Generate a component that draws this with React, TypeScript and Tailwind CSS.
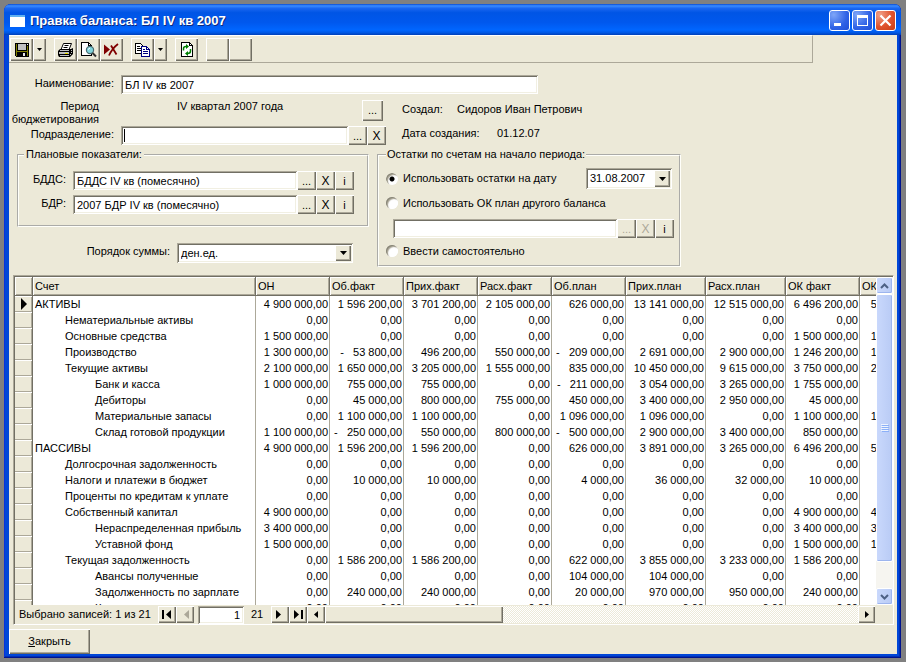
import type { ReactNode } from "react";

const RAISED =
  "bg-[#ece9d8] shadow-[inset_1px_1px_#fff,inset_-1px_-1px_#716f64,inset_-2px_-2px_#aca899]";
const SUNKEN =
  "bg-white shadow-[inset_1px_1px_#aca899,inset_-1px_-1px_#fff,inset_2px_2px_#716f64,inset_-2px_-2px_#f1efe2]";

/* ---------- toolbar icons ---------- */

const SaveIcon = () => (
  <svg width="16" height="16" viewBox="0 0 16 16" shapeRendering="crispEdges" aria-hidden="true">
    <path d="M1 1h14v14H2l-1-1z" fill="#000" />
    <path d="M2 2h1v12H2zM13 4h1v10h-1zM3 9h10v1H3z" fill="#808000" />
    <path d="M4 2h8v6H4z" fill="#c0c0c0" />
    <path d="M13 2h1v1h-1z" fill="#fff" />
    <path d="M4 10h8v4H4z" fill="#000" />
    <path d="M9 11h2v3H9z" fill="#e8e8e8" />
  </svg>
);

const PrintIcon = () => (
  <svg width="17" height="16" viewBox="0 0 17 16" aria-hidden="true">
    <path d="M6.500 1.500h8l-2.500 6h-8z" fill="#fff" stroke="#000" />
    <path d="M7.500 3.500h4M6.500 5.500h4" stroke="#000" />
    <path d="M3 7h11l2-1v6l-3 3H2l-1-2V9z" fill="#000" />
    <path d="M3 8h9v1H3zM2 10h10v2H2zM3 13h9v1H3z" fill="#c0c0c0" shapeRendering="crispEdges" />
    <path d="M8 11h3v1H8z" fill="#e8e000" shapeRendering="crispEdges" />
    <path d="M14 8h1v1h-1zM14 10h1v1h-1zM13 12h1v1h-1z" fill="#c0c0c0" shapeRendering="crispEdges" />
  </svg>
);

const PreviewIcon = () => (
  <svg width="17" height="17" viewBox="0 0 17 17" aria-hidden="true">
    <path d="M1.500 1.500h7l3 3v10h-10z" fill="#fff" stroke="#000" shapeRendering="crispEdges" />
    <path d="M8.500 1.500v3h3" fill="none" stroke="#000" shapeRendering="crispEdges" />
    <circle cx="10" cy="9" r="3.600" fill="#7fd4dc" stroke="#4a6a70" strokeWidth="1.200" />
    <path d="M8 8.500l2-1.500" stroke="#fff" />
    <path d="M12.500 12l3.500 3.500" stroke="#303030" strokeWidth="2" />
  </svg>
);

const DeleteIcon = () => (
  <svg width="17" height="14" viewBox="0 0 17 14" aria-hidden="true">
    <path d="M1 1.500l6 5-6 5z" fill="#800000" />
    <path d="M15 1C11 4 8.500 7 6 12.500M8 2.500l5.500 9" fill="none" stroke="#800000" strokeWidth="1.800" />
  </svg>
);

const CopyIcon = () => (
  <svg width="17" height="16" viewBox="0 0 17 16" shapeRendering="crispEdges" aria-hidden="true">
    <path d="M1.500 1.500h5l3 3v7h-8z" fill="#fff" stroke="#000" />
    <path d="M3 4.500h3M3 6.500h5M3 8.500h5" stroke="#000" />
    <path d="M7.500 4.500h5l3 3v7h-8z" fill="#fff" stroke="#000080" />
    <path d="M12.500 4.500v3h3M9 7.500h2M9 9.500h5M9 11.500h5" fill="none" stroke="#000080" />
  </svg>
);

const RefreshIcon = () => (
  <svg width="14" height="17" viewBox="0 0 14 17" aria-hidden="true">
    <path d="M1.500 1.500h8l3 3v11h-11z" fill="#fff" stroke="#000" shapeRendering="crispEdges" />
    <path d="M9.500 1.500v3h3" fill="none" stroke="#000" shapeRendering="crispEdges" />
    <path d="M3.500 9.500V7.500q0-2 2.500-2M10.500 8v2q0 2.500-3 2.500" fill="none" stroke="#008000" strokeWidth="1.500" />
    <path d="M6 3l3 2.500L6 8zM8 10l-3 2.500L8 15z" fill="#008000" />
  </svg>
);

const DownArrow = () => (
  <svg width="7" height="4" viewBox="0 0 7 4" aria-hidden="true">
    <path d="M0 0h7L3.500 4z" fill="#000" />
  </svg>
);

const TinyDownArrow = () => (
  <svg width="5" height="3" viewBox="0 0 5 3" className="shrink-0" aria-hidden="true">
    <path d="M0 0h5L2.500 3z" fill="#000" />
  </svg>
);

const RightArrow = ({ bar = false }: { bar?: boolean }) => (
  <svg width="10" height="9" viewBox="0 0 10 9" aria-hidden="true">
    <path d="M1 0v9l5-4.500z" fill="#000" />
    {bar && <path d="M8 0h2v9H8z" fill="#000" />}
  </svg>
);

const LeftArrow = ({ bar = false, color = "#000" }: { bar?: boolean; color?: string }) => (
  <svg width="10" height="9" viewBox="0 0 10 9" aria-hidden="true">
    <path d="M9 0v9L4 4.500z" fill={color} />
    {bar && <path d="M0 0h2v9H0z" fill={color} />}
  </svg>
);

/* ---------- small controls ---------- */

function ToolButton({ label, narrow, children }: { label: string; narrow?: boolean; children?: ReactNode }) {
  return (
    <button
      type="button"
      aria-label={label}
      className={`flex h-[23px] items-center justify-center ${narrow ? "w-[13px]" : "w-[23px]"} ${RAISED}`}
    >
      {children}
    </button>
  );
}

function SmallButton({ text, label, disabled }: { text: string; label: string; disabled?: boolean }) {
  return (
    <button
      type="button"
      aria-label={label}
      disabled={disabled}
      className={`h-[19px] w-[19px] text-center leading-4 disabled:text-[#aca899] ${text === "X" ? "text-[12px]" : "text-[11px]"} ${RAISED}`}
    >
      {text}
    </button>
  );
}

function PlanRow({ id, label, value }: { id: string; label: string; value: string }) {
  return (
    <div className="flex items-start">
      <label htmlFor={id} className="mr-[7px] w-[47px] text-right leading-4">
        {label}
      </label>
      <input id={id} defaultValue={value} className={`h-[19px] w-[224px] px-1 outline-none ${SUNKEN}`} />
      <SmallButton text="..." label={`${label} выбрать`} />
      <SmallButton text="X" label={`${label} очистить`} />
      <SmallButton text="i" label={`${label} информация`} />
    </div>
  );
}

function Radio({ id, label, checked }: { id: string; label: string; checked?: boolean }) {
  return (
    <div className="flex h-4 items-center gap-[5px]">
      <input
        id={id}
        type="radio"
        name="rest"
        defaultChecked={checked}
        className="h-3 w-3 appearance-none rounded-full bg-white shadow-[inset_1px_1px_#8a8778,inset_-1px_-1px_#fff,inset_2px_2px_1px_#aca899] checked:bg-[radial-gradient(circle,#000_2px,#fff_3px)]"
      />
      <label htmlFor={id}>{label}</label>
    </div>
  );
}

function Combo({ id, value, className }: { id: string; value: string; className: string }) {
  return (
    <div className={`relative ${className}`}>
      <select id={id} aria-label={value} className={`h-full w-full appearance-none pl-1 outline-none ${SUNKEN}`}>
        <option>{value}</option>
      </select>
      <span
        className={`pointer-events-none absolute inset-y-[2px] right-[2px] flex w-4 items-center justify-center ${RAISED}`}
      >
        <DownArrow />
      </span>
    </div>
  );
}

/* ---------- balance data ---------- */

const Z = "0,00";

const columns = [
  { title: "ОН", width: "w-[74px]" },
  { title: "Об.факт", width: "w-[74px]" },
  { title: "Прих.факт", width: "w-[74px]" },
  { title: "Расх.факт", width: "w-[74px]" },
  { title: "Об.план", width: "w-[74px]" },
  { title: "Прих.план", width: "w-[80px]" },
  { title: "Расх.план", width: "w-[80px]" },
  { title: "ОК факт", width: "w-[74px]" },
  { title: "ОК план", width: "w-[77px]" },
];

const indent = ["pl-[2px]", "pl-8", "pl-[62px]"];

const rows: { level: number; name: string; v: string[] }[] = [
  { level: 0, name: "АКТИВЫ", v: ["4 900 000,00", "1 596 200,00", "3 701 200,00", "2 105 000,00", "626 000,00", "13 141 000,00", "12 515 000,00", "6 496 200,00", "5 526 000,00"] },
  { level: 1, name: "Нематериальные активы", v: [Z, Z, Z, Z, Z, Z, Z, Z, Z] },
  { level: 1, name: "Основные средства", v: ["1 500 000,00", Z, Z, Z, Z, Z, Z, "1 500 000,00", "1 500 000,00"] },
  { level: 1, name: "Производство", v: ["1 300 000,00", "-   53 800,00", "496 200,00", "550 000,00", "-   209 000,00", "2 691 000,00", "2 900 000,00", "1 246 200,00", "1 091 000,00"] },
  { level: 1, name: "Текущие активы", v: ["2 100 000,00", "1 650 000,00", "3 205 000,00", "1 555 000,00", "835 000,00", "10 450 000,00", "9 615 000,00", "3 750 000,00", "2 935 000,00"] },
  { level: 2, name: "Банк и касса", v: ["1 000 000,00", "755 000,00", "755 000,00", Z, "-   211 000,00", "3 054 000,00", "3 265 000,00", "1 755 000,00", "789 000,00"] },
  { level: 2, name: "Дебиторы", v: [Z, "45 000,00", "800 000,00", "755 000,00", "450 000,00", "3 400 000,00", "2 950 000,00", "45 000,00", "450 000,00"] },
  { level: 2, name: "Материальные запасы", v: [Z, "1 100 000,00", "1 100 000,00", Z, "1 096 000,00", "1 096 000,00", Z, "1 100 000,00", "1 096 000,00"] },
  { level: 2, name: "Склад готовой продукции", v: ["1 100 000,00", "-   250 000,00", "550 000,00", "800 000,00", "-   500 000,00", "2 900 000,00", "3 400 000,00", "850 000,00", "600 000,00"] },
  { level: 0, name: "ПАССИВЫ", v: ["4 900 000,00", "1 596 200,00", "1 596 200,00", Z, "626 000,00", "3 891 000,00", "3 265 000,00", "6 496 200,00", "5 526 000,00"] },
  { level: 1, name: "Долгосрочная задолженность", v: [Z, Z, Z, Z, Z, Z, Z, Z, Z] },
  { level: 1, name: "Налоги и платежи в бюджет", v: [Z, "10 000,00", "10 000,00", Z, "4 000,00", "36 000,00", "32 000,00", "10 000,00", "4 000,00"] },
  { level: 1, name: "Проценты по кредитам к уплате", v: [Z, Z, Z, Z, Z, Z, Z, Z, Z] },
  { level: 1, name: "Собственный капитал", v: ["4 900 000,00", Z, Z, Z, Z, Z, Z, "4 900 000,00", "4 900 000,00"] },
  { level: 2, name: "Нераспределенная прибыль", v: ["3 400 000,00", Z, Z, Z, Z, Z, Z, "3 400 000,00", "3 400 000,00"] },
  { level: 2, name: "Уставной фонд", v: ["1 500 000,00", Z, Z, Z, Z, Z, Z, "1 500 000,00", "1 500 000,00"] },
  { level: 1, name: "Текущая задолженность", v: [Z, "1 586 200,00", "1 586 200,00", Z, "622 000,00", "3 855 000,00", "3 233 000,00", "1 586 200,00", "622 000,00"] },
  { level: 2, name: "Авансы полученные", v: [Z, Z, Z, Z, "104 000,00", "104 000,00", Z, Z, "104 000,00"] },
  { level: 2, name: "Задолженность по зарплате", v: [Z, "240 000,00", "240 000,00", Z, "20 000,00", "970 000,00", "950 000,00", "240 000,00", "20 000,00"] },
  { level: 2, name: "Кредиторы", v: [Z, Z, Z, Z, Z, Z, Z, Z, Z] },
];

const HEAD =
  "h-[19px] overflow-hidden border-r border-b border-[#716f64] bg-[#ece9d8] p-0 pl-[2px] text-left font-normal whitespace-nowrap shadow-[inset_1px_1px_#fff,inset_-1px_-1px_#aca899]";

function BalanceTable() {
  return (
    <table className="w-[922px] table-fixed border-separate border-spacing-0 leading-4">
      <thead>
        <tr>
          <th aria-label="Указатель" className={`w-[18px] ${HEAD}`} />
          <th className={`w-[223px] ${HEAD}`}>Счет</th>
          {columns.map((c) => (
            <th key={c.title} className={`${c.width} ${HEAD}`}>
              {c.title}
            </th>
          ))}
        </tr>
      </thead>
      <tbody>
        {rows.map((r, i) => (
          <tr key={r.name}>
            <td className="h-4 border-r border-[#716f64] bg-[#ece9d8] p-0 shadow-[inset_0_1px_#fff,inset_-1px_-1px_#aca899]">
              {i === 0 && (
                <svg width="6" height="12" viewBox="0 0 6 12" className="ml-[6px] block" aria-hidden="true">
                  <path d="M0 0l6 6-6 6z" fill="#000" />
                </svg>
              )}
            </td>
            <td className={`h-4 overflow-hidden border-r border-[#aca899] p-0 whitespace-nowrap ${indent[r.level]}`}>
              {r.name}
            </td>
            {r.v.map((value, k) => (
              <td key={k} className="h-4 border-r border-[#aca899] p-0 pr-px text-right whitespace-pre">
                {value}
              </td>
            ))}
          </tr>
        ))}
      </tbody>
    </table>
  );
}

function Chevron({ up }: { up?: boolean }) {
  return (
    <svg width="9" height="6" viewBox="0 0 9 6" aria-hidden="true">
      <path d={up ? "M1 5l3.500-3.500L8 5" : "M1 1l3.500 3.500L8 1"} fill="none" stroke="#4d6185" strokeWidth="2" />
    </svg>
  );
}

const XP_BAR = "rounded-[2px] border border-white bg-linear-to-r from-[#c9d8fc] to-[#b9cbf5] shadow-[inset_-1px_-1px_#9db5ee]";

function VerticalScroll() {
  return (
    <div className="flex w-[17px] shrink-0 flex-col bg-[#f6f5f0]">
      <button type="button" aria-label="Вверх" className={`flex h-[17px] shrink-0 items-center justify-center ${XP_BAR}`}>
        <Chevron up />
      </button>
      <div className="flex min-h-0 flex-1 flex-col">
        <div className={`flex h-[91%] flex-col items-center justify-center gap-px ${XP_BAR}`}>
          {[0, 1, 2, 3].map((n) => (
            <span key={n} className="h-px w-[7px] bg-[#eef4fe] shadow-[1px_1px_#8cb0f8]" />
          ))}
        </div>
      </div>
      <button type="button" aria-label="Вниз" className={`flex h-[17px] shrink-0 items-center justify-center ${XP_BAR}`}>
        <Chevron />
      </button>
    </div>
  );
}

function NavButton({ label, children, disabled }: { label: string; children: ReactNode; disabled?: boolean }) {
  return (
    <button
      type="button"
      aria-label={label}
      disabled={disabled}
      className={`flex h-[17px] w-[18px] shrink-0 items-center justify-center ${RAISED}`}
    >
      {children}
    </button>
  );
}

/* ---------- window ---------- */

const CAPTION = "flex h-[21px] w-[21px] items-center justify-center rounded-[3px] border border-white";

function TitleBar() {
  return (
    <header className="flex h-[31px] shrink-0 items-center rounded-t-[7px] bg-[linear-gradient(#0a4bd0_0%,#3a8cff_6%,#1a66f0_14%,#0055e5_28%,#0058ee_60%,#0066ff_84%,#0058e6_92%,#0040b8_100%)] pt-[2px] pr-[5px] pl-[6px]">
      <span className="mr-[5px] h-[12px] w-[15px] border-t-2 border-[#5fb0f0] bg-white" />
      <h1 className="flex-1 pt-px text-[13px] font-bold text-white [text-shadow:1px_1px_#0a2a80]">
        Правка баланса: БЛ IV кв 2007
      </h1>
      <div className="flex gap-[2px]">
        <button type="button" aria-label="Свернуть" className={`bg-[radial-gradient(circle_at_20%_20%,#7fa6f8,#2f62e6_60%,#1f4fd8)] ${CAPTION}`}>
          <svg width="13" height="13" viewBox="0 0 13 13" aria-hidden="true">
            <path d="M1 9h7v3H1z" fill="#fff" />
          </svg>
        </button>
        <button type="button" aria-label="Развернуть" className={`bg-[radial-gradient(circle_at_20%_20%,#7fa6f8,#2f62e6_60%,#1f4fd8)] ${CAPTION}`}>
          <svg width="13" height="13" viewBox="0 0 13 13" aria-hidden="true">
            <path d="M1 1h11v11H1zM2 4v7h9V4z" fill="#fff" fillRule="evenodd" />
          </svg>
        </button>
        <button type="button" aria-label="Закрыть окно" className={`bg-[radial-gradient(circle_at_20%_20%,#f0a088,#e0532e_55%,#c83c14)] ${CAPTION}`}>
          <svg width="13" height="13" viewBox="0 0 13 13" aria-hidden="true">
            <path d="M1.500 1.500l10 10M11.500 1.500l-10 10" stroke="#fff" strokeWidth="2.200" />
          </svg>
        </button>
      </div>
    </header>
  );
}

function Toolbar() {
  return (
    <div role="toolbar" className="mr-[84px] flex gap-2 border-t border-r border-b border-t-white border-r-[#aca899] border-b-[#aca899] pt-[2px] pb-px">
      <div className="flex pl-px">
        <ToolButton label="Сохранить"><SaveIcon /></ToolButton>
        <ToolButton label="Варианты сохранения" narrow><TinyDownArrow /></ToolButton>
      </div>
      <div className="flex">
        <ToolButton label="Печать"><PrintIcon /></ToolButton>
        <ToolButton label="Просмотр"><PreviewIcon /></ToolButton>
        <ToolButton label="Удалить"><DeleteIcon /></ToolButton>
      </div>
      <div className="flex">
        <ToolButton label="Копировать"><CopyIcon /></ToolButton>
        <ToolButton label="Варианты копирования" narrow><TinyDownArrow /></ToolButton>
      </div>
      <ToolButton label="Обновить"><RefreshIcon /></ToolButton>
      <div className="flex">
        <ToolButton label="Дополнительно 1" />
        <ToolButton label="Дополнительно 2" />
      </div>
    </div>
  );
}

const GROUP = "min-w-0 border-2 border-[#fffffa] [border-style:groove]";

function BalanceForm() {
  return (
    <form className="pt-3">
      <div className="flex items-start">
        <label htmlFor="name" className="mr-[7px] w-[105px] text-right leading-4">
          Наименование:
        </label>
        <input id="name" defaultValue="БЛ IV кв 2007" className={`h-[19px] w-[417px] px-1 outline-none ${SUNKEN}`} />
      </div>

      <div className="flex">
        <div className="w-[377px]">
          <div className="flex h-8 items-start pt-[6px]">
            <span className="w-[90px] text-right leading-[13px]">
              Период
              <br />
              бюджетирования
            </span>
            <span className="ml-[78px] flex-1 leading-[13px]">IV квартал 2007 года</span>
            <button type="button" aria-label="Выбрать период" className={`mr-[3px] h-[21px] w-[21px] ${RAISED}`}>
              ...
            </button>
          </div>
          <div className="flex items-start">
            <label htmlFor="unit" className="mr-[7px] w-[105px] text-right leading-4">
              Подразделение:
            </label>
            <div className="relative">
              <input id="unit" className={`block h-[19px] w-[227px] px-1 outline-none ${SUNKEN}`} />
              <span className="absolute top-[3px] left-[3px] h-[13px] w-px bg-black" />
            </div>
            <SmallButton text="..." label="Выбрать подразделение" />
            <SmallButton text="X" label="Очистить подразделение" />
          </div>
        </div>
        <dl className="flex flex-col gap-2 pt-[7px] pl-4 leading-4">
          <div className="flex">
            <dt className="w-[55px]">Создал:</dt>
            <dd>Сидоров Иван Петрович</dd>
          </div>
          <div className="flex">
            <dt className="w-[95px]">Дата создания:</dt>
            <dd>01.12.07</dd>
          </div>
        </dl>
      </div>

      <div className="flex items-start gap-2 pt-[3px] pl-2">
        <div className="w-[352px]">
          <fieldset className={`flex flex-col gap-[5px] pt-[10px] pb-[11px] ${GROUP}`}>
            <legend className="ml-[5px] px-[2px] leading-[13px]">Плановые показатели:</legend>
            <PlanRow id="bdds" label="БДДС:" value="БДДС IV кв (помесячно)" />
            <PlanRow id="bdr" label="БДР:" value="2007 БДР IV кв (помесячно)" />
          </fieldset>
          <div className="mt-4 flex items-start justify-end pr-4">
            <label htmlFor="order" className="mr-[7px] leading-4">
              Порядок суммы:
            </label>
            <Combo id="order" value="ден.ед." className="h-5 w-[176px]" />
          </div>
        </div>

        <fieldset className={`w-[304px] pt-[7px] pr-[5px] pb-[6px] pl-[7px] ${GROUP}`}>
          <legend className="px-px leading-[13px]">Остатки по счетам на начало периода:</legend>
          <div className="flex items-center justify-between pr-[2px]">
            <Radio id="by-date" label="Использовать остатки на дату" checked />
            <Combo id="date" value="31.08.2007" className="h-[21px] w-[86px]" />
          </div>
          <div className="mt-[6px]">
            <Radio id="by-plan" label="Использовать ОК план другого баланса" />
          </div>
          <div className="mt-2 flex pl-[7px]">
            <input aria-label="Другой баланс" className={`h-[19px] w-[224px] px-1 outline-none ${SUNKEN}`} />
            <SmallButton text="..." label="Выбрать баланс" disabled />
            <SmallButton text="X" label="Очистить баланс" disabled />
            <SmallButton text="i" label="Информация о балансе" />
          </div>
          <div className="mt-[5px]">
            <Radio id="manual" label="Ввести самостоятельно" />
          </div>
        </fieldset>
      </div>
    </form>
  );
}

function GridFooter() {
  return (
    <div className="flex h-[19px] shrink-0 items-center bg-[#ece9d8]">
      <span className="w-[143px] pl-1 whitespace-nowrap">Выбрано записей: 1 из 21</span>
      <NavButton label="Первая"><LeftArrow bar /></NavButton>
      <NavButton label="Предыдущая" disabled><LeftArrow color="#aca899" /></NavButton>
      <input aria-label="Номер записи" defaultValue="1" className={`ml-1 h-[18px] w-[46px] px-1 text-right outline-none ${SUNKEN}`} />
      <span className="w-[27px] pl-[7px]">21</span>
      <NavButton label="Следующая"><RightArrow /></NavButton>
      <NavButton label="Последняя"><RightArrow bar /></NavButton>
      <NavButton label="Влево">
        <svg width="4" height="7" viewBox="0 0 4 7" aria-hidden="true"><path d="M4 0v7L0 3.500z" /></svg>
      </NavButton>
      <div className="flex h-[17px] min-w-0 flex-1 bg-[repeating-conic-gradient(#fff_0_25%,#ece9d8_0_50%)] bg-[length:2px_2px]">
        <div className={`h-full w-1/3 ${RAISED}`} />
      </div>
      <button type="button" aria-label="Вправо" className={`mr-[18px] flex h-[17px] w-[17px] items-center justify-center ${RAISED}`}>
        <svg width="4" height="7" viewBox="0 0 4 7" aria-hidden="true"><path d="M0 0v7l4-3.500z" /></svg>
      </button>
    </div>
  );
}

export default function App() {
  return (
    <div className="flex h-screen bg-[#808080] pt-1 pr-[5px] pb-1 pl-1 font-['Liberation_Sans',Arial,sans-serif] text-[11px] text-black">
      <div className="flex min-w-0 flex-1 flex-col rounded-t-[7px] bg-[#0046d8] shadow-[inset_-1px_-1px_#00138c,inset_1px_0_#0831d9,inset_-2px_-2px_#0030b8]">
        <TitleBar />
        <main className="mr-1 mb-1 ml-[5px] flex min-h-0 flex-1 flex-col bg-[#ece9d8]">
          <Toolbar />
          <BalanceForm />
          <section className="mt-2 mr-[3px] ml-1 flex min-h-0 flex-1 border border-t-[#aca899] border-r-white border-b-white border-l-[#aca899]">
            <div className="flex min-w-0 flex-1 flex-col border-t border-l border-[#716f64]">
              <div className="flex min-h-0 flex-1">
                <div className="min-w-0 flex-1 overflow-hidden bg-white">
                  <BalanceTable />
                </div>
                <VerticalScroll />
              </div>
              <GridFooter />
            </div>
          </section>
          <footer className="pt-1">
            <button type="button" className={`h-[25px] w-[81px] ${RAISED}`}>
              <span className="underline">З</span>акрыть
            </button>
          </footer>
        </main>
      </div>
    </div>
  );
}
